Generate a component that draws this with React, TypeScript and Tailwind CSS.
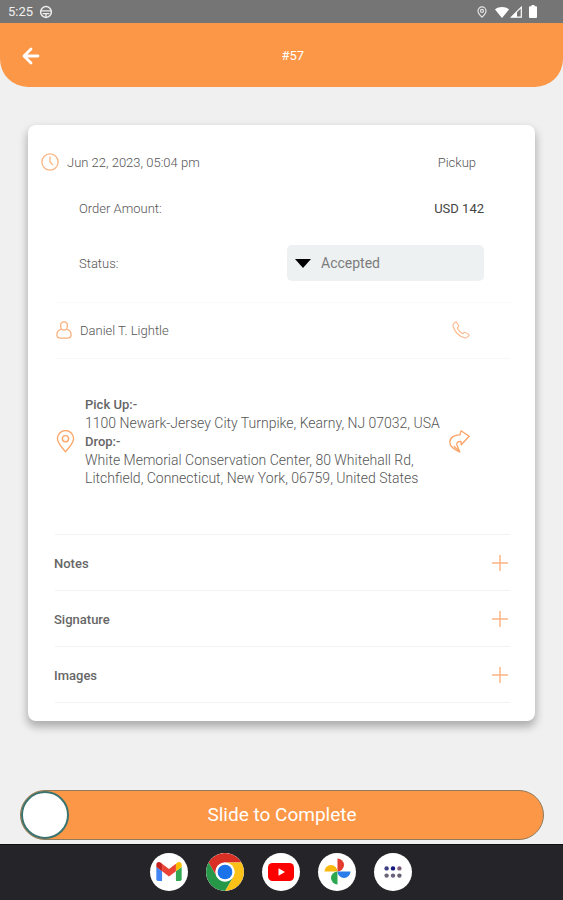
import { useState } from "react";

function StatusBar() {
  return (
    <div className="flex h-[23px] shrink-0 items-center justify-between bg-[#757575] pr-6 pl-2 text-white">
      <div className="flex items-center gap-1.5">
        <span className="text-[13px] leading-4 text-[#f0f0f0]">5:25</span>
        <svg className="size-3.5" viewBox="0 0 14 14" fill="none" stroke="#eee" strokeWidth="1.5" aria-hidden="true">
          <circle cx="7" cy="7" r="5.400" />
          <path d="M2 5.800h10M3.600 8.600h6.800M7 8.600v3.600" strokeWidth="1.300" />
        </svg>
      </div>
      <div className="flex items-center">
        <svg className="mr-[7px] h-3 w-3" viewBox="0 0 12 12" fill="none" stroke="#e4e4e4" aria-hidden="true">
          <path d="M6 11.200C3.400 8.600 2 6.700 2 4.900a4 4 0 0 1 8 0C10 6.700 8.600 8.600 6 11.200Z" strokeWidth="1.200" />
          <circle cx="6" cy="4.900" r="1.500" strokeWidth="1.200" />
        </svg>
        <svg className="h-3 w-3.5" viewBox="0 0 14 12" fill="#fff" aria-hidden="true">
          <path d="M7 12 0 3.400C4 .2 10 .2 14 3.400Z" />
        </svg>
        <svg className="ml-px h-3 w-3" viewBox="0 0 12 12" fill="none" aria-hidden="true">
          <path d="M11.300 1.200v10H1.300Z" stroke="#fff" strokeWidth="1.200" />
          <path d="M7 5.400v5.800H1.300Z" fill="#fff" />
        </svg>
        <svg className="mr-0.5 ml-[7px] h-[13px] w-2" viewBox="0 0 8 13" fill="#fff" aria-hidden="true">
          <path d="M2.500 0h3v1.300H7a1 1 0 0 1 1 1V12a1 1 0 0 1-1 1H1a1 1 0 0 1-1-1V2.300a1 1 0 0 1 1-1h1.500Z" />
        </svg>
      </div>
    </div>
  );
}

function Header() {
  return (
    <header className="grid h-16 shrink-0 grid-cols-2 items-center rounded-b-[28px] bg-[#fb9746] px-5 pt-0.5 text-white">
      <button type="button" aria-label="Back" className="flex size-[22px] items-center justify-center">
        <svg className="size-[18px]" viewBox="0 0 18 18" fill="none" stroke="currentColor" strokeWidth="2.800" strokeLinecap="round" strokeLinejoin="round" aria-hidden="true">
          <path d="M9 2 2 9l7 7M2.500 9H16" />
        </svg>
      </button>
      <h1 className="text-[13px] leading-5">#57</h1>
    </header>
  );
}

function ExpandRow({ title }: { title: string }) {
  const [open, setOpen] = useState(false);
  return (
    <div className="border-b border-[#f3f3f3]">
      <button
        type="button"
        aria-expanded={open}
        onClick={() => setOpen(!open)}
        className="-ml-px flex h-[55px] w-full items-center justify-between pt-0.5 text-left text-[13px] font-medium text-[#666]"
      >
        {title}
        <svg className="mb-0.5 size-[18px]" viewBox="0 0 18 18" stroke="#fbb583" strokeWidth="1.500" aria-hidden="true">
          <path d={open ? "M1 9h16" : "M1 9h16M9 1v16"} />
        </svg>
      </button>
    </div>
  );
}

function OrderCard() {
  return (
    <section className="mx-7 mt-[38px] rounded-lg bg-white pt-3.5 pb-[18px] text-[13px] leading-[18px] font-light text-[#555] shadow-[0_5px_8px_1px_rgba(0,0,0,0.28)]">
      <div className="flex h-[46px] items-center pr-[59px] pl-[13px]">
        <svg className="mr-2 size-[18px]" viewBox="0 0 18 18" fill="none" stroke="#fbb583" strokeWidth="1.300" strokeLinecap="round" aria-hidden="true">
          <circle cx="9" cy="9" r="8.100" />
          <path d="M9 4v5l2.500 2.500" />
        </svg>
        <time dateTime="2023-06-22T17:04" className="flex-1 pt-0.5">Jun 22, 2023, 05:04 pm</time>
        <span className="pt-0.5">Pickup</span>
      </div>
      <div className="flex h-[46px] items-center justify-between pt-0.5 pr-[51px] pl-[51px]">
        <span>Order Amount:</span>
        <span className="font-normal text-[#444]">USD 142</span>
      </div>
      <div className="flex h-16 items-center justify-between pr-[51px] pl-[51px]">
        <label htmlFor="status" className="pt-0.5">Status:</label>
        <div className="relative w-[197px]">
          <select id="status" defaultValue="Accepted" className="h-9 w-full appearance-none rounded-[5px] bg-[#edf1f2] pl-[34px] text-[14px] font-normal text-[#7c7c7c]">
            <option>Accepted</option>
            <option>Picked Up</option>
            <option>Completed</option>
          </select>
          <svg className="pointer-events-none absolute top-3.5 left-2 h-[9px] w-4" viewBox="0 0 16 9" aria-hidden="true">
            <path d="M0 0h16L8 9Z" />
          </svg>
        </div>
      </div>

      <div className="mt-[7px] mr-[25px] ml-[27px] border-t border-[#fafafa]">
        <div className="flex h-14 items-center border-b border-[#f8f8f8] pr-10 pb-0.5">
          <svg className="mr-2 ml-px h-[18px] w-4" viewBox="0 0 16 18" fill="none" stroke="#fbb07a" strokeWidth="1.300" strokeLinejoin="round" aria-hidden="true">
            <path d="M8 .8c2.200 0 3.400 1.700 3.400 3.900S10 9.200 8 9.200 4.600 6.900 4.600 4.700 5.800.8 8 .8Z" />
            <path d="M5.300 8.300C2.600 8.800.9 11 .9 13.700c0 2.200 1.700 3.400 3.600 3.400h7c1.900 0 3.600-1.200 3.600-3.400 0-2.700-1.700-4.900-4.400-5.400" />
          </svg>
          <span className="flex-1 pt-0.5">Daniel T. Lightle</span>
          <a href="tel:" aria-label="Call customer">
            <svg className="size-[18px]" viewBox="0 0 18 18" fill="none" stroke="#fcb98d" strokeWidth="1.100" strokeLinejoin="round" aria-hidden="true">
              <path d="M1.400 3.100 3.300 1.100c.5-.4 1-.3 1.300.2l2 3.200c.3.500.2 1-.2 1.400L5.300 7c.9 2.200 3 4.500 5.600 5.800l1.200-1.200c.4-.4.900-.5 1.400-.2l3.200 2c.5.300.6.800.2 1.300l-1.800 1.700c-.7.600-1.500.7-2.500.4C7.200 15.200 2.700 10.600 1.100 5.500c-.3-1-.3-1.700.3-2.400Z" />
            </svg>
          </a>
        </div>

        <div className="flex h-44 items-center border-b border-[#f3f3f3] pr-10 pb-2.5">
          <svg className="mr-2.5 h-[23px] w-5 shrink-0" viewBox="0 0 20 23" fill="none" stroke="#fba76a" strokeWidth="1.400" strokeLinejoin="round" aria-hidden="true">
            <path d="M10.500 21.800C5.500 16 2.400 12.500 2.400 8.700a8.100 8.100 0 0 1 16.200 0C18.600 12.500 15.500 16 10.500 21.800Z" />
            <circle cx="10.500" cy="8.700" r="3.100" />
          </svg>
          <dl className="flex min-w-0 flex-1 flex-col gap-px text-[14px] whitespace-nowrap">
            <div>
              <dt className="text-[13px] font-medium text-[#666]">Pick Up:-</dt>
              <dd>1100 Newark-Jersey City Turnpike, Kearny, NJ 07032, USA</dd>
            </div>
            <div>
              <dt className="text-[13px] font-medium text-[#666]">Drop:-</dt>
              <dd>
                White Memorial Conservation Center, 80 Whitehall Rd,
                <br />
                Litchfield, Connecticut, New York, 06759, United States
              </dd>
            </div>
          </dl>
          <button type="button" aria-label="Get directions">
            <svg className="h-[23px] w-[21px]" viewBox="0 0 21 23" fill="none" stroke="#fba367" strokeWidth="1.300" strokeLinejoin="round" strokeLinecap="round" aria-hidden="true">
              <path d="M12 .8 20.200 6.300 12.300 14.800 11.900 11.300C9 11.200 7.300 12.800 7.900 15L10.800 22C6 19.600 1 17.200.8 12.200.7 7.500 5.800 4.600 11 4.800Z" />
              <path d="m5.200 16.400 5 4.600" />
            </svg>
          </button>
        </div>

        <ExpandRow title="Notes" />
        <ExpandRow title="Signature" />
        <ExpandRow title="Images" />
      </div>
    </section>
  );
}

function SlideToComplete() {
  const [value, setValue] = useState(0);
  return (
    <div className="relative mt-auto mr-[19px] mb-1 ml-5 h-[50px] rounded-full border border-[#8f7c5c] bg-[#fb9746]">
      <label htmlFor="complete" className="absolute inset-0 flex items-center justify-center text-[19px] text-white">
        Slide to Complete
      </label>
      <input
        id="complete"
        type="range"
        min="0"
        max="100"
        value={value}
        onChange={(e) => setValue(Number(e.target.value))}
        className="relative block h-12 w-full cursor-pointer appearance-none rounded-full bg-transparent outline-none [&::-webkit-slider-thumb]:size-12 [&::-webkit-slider-thumb]:appearance-none [&::-webkit-slider-thumb]:rounded-full [&::-webkit-slider-thumb]:border-2 [&::-webkit-slider-thumb]:border-[#3a7470] [&::-webkit-slider-thumb]:bg-white"
      />
    </div>
  );
}

const dockButton = "flex size-[38px] items-center justify-center overflow-hidden rounded-full bg-white";

function Dock() {
  return (
    <nav aria-label="Apps" className="flex h-14 shrink-0 items-center justify-center gap-[18px] border-t border-[#101013] bg-[#242429] pr-px pb-0.5">
      <button type="button" aria-label="Gmail" className={dockButton}>
        <svg className="h-[19px] w-[26px]" viewBox="52 42 88 66" aria-hidden="true">
          <path fill="#4285f4" d="M58 108h14V74L52 59v43c0 3.320 2.690 6 6 6" />
          <path fill="#34a853" d="M120 108h14c3.320 0 6-2.690 6-6V59l-20 15" />
          <path fill="#fbbc04" d="M120 48v26l20-15v-8c0-7.420-8.470-11.650-14.400-7.200" />
          <path fill="#ea4335" d="M72 74V48l24 18 24-18v26L96 92" />
          <path fill="#c5221f" d="M52 51v8l20 15V48l-5.600-4.200c-5.940-4.450-14.400-.22-14.400 7.200" />
        </svg>
      </button>
      <button type="button" aria-label="Chrome" className={dockButton}>
        <svg className="size-[38px]" viewBox="0 0 48 48" aria-hidden="true">
          <path fill="#d93025" d="M24 12h20.780A24 24 0 0 0 3.220 12l10.390 18A12 12 0 0 1 24 12Z" />
          <path fill="#fbc116" d="M24 12h20.780A24 24 0 0 1 24 48l10.390-18A12 12 0 0 0 24 12Z" />
          <path fill="#279847" d="M13.610 30 3.220 12A24 24 0 0 0 24 48l10.390-18A12 12 0 0 1 13.610 30Z" />
          <circle cx="24" cy="24" r="12" fill="#fff" />
          <circle cx="24" cy="24" r="9.300" fill="#1a73e8" />
        </svg>
      </button>
      <button type="button" aria-label="YouTube" className={dockButton}>
        <svg className="h-[18px] w-[26px]" viewBox="0 0 26 18" aria-hidden="true">
          <rect width="26" height="18" rx="4.500" fill="#f00" />
          <path d="m10.500 5.200 6.500 3.800-6.500 3.800Z" fill="#fff" />
        </svg>
      </button>
      <button type="button" aria-label="Photos" className={dockButton}>
        <svg className="size-[27px]" viewBox="0 0 27 27" aria-hidden="true">
          <path fill="#e33b2e" d="M13.500.5a6.500 6.500 0 0 1 0 13Z" />
          <path fill="#f9b80e" d="M.5 13.500a6.500 6.500 0 0 1 13 0Z" />
          <path fill="#2b7de9" d="M26.500 13.500a6.500 6.500 0 0 1-13 0Z" />
          <path fill="#2fa650" d="M13.500 26.500a6.500 6.500 0 0 1 0-13Z" />
        </svg>
      </button>
      <button type="button" aria-label="All apps" className={dockButton}>
        <svg className="h-3 w-[18px]" viewBox="0 0 18 12" aria-hidden="true">
          <circle cx="2.600" cy="2.400" r="2.200" fill="#3d3f80" />
          <circle cx="9" cy="2.400" r="2.200" fill="#15157f" />
          <circle cx="15.400" cy="2.400" r="2.200" fill="#80607a" />
          <circle cx="2.600" cy="9.600" r="2.200" fill="#6a6675" />
          <circle cx="9" cy="9.600" r="2.200" fill="#6a6080" />
          <circle cx="15.400" cy="9.600" r="2.200" fill="#666072" />
        </svg>
      </button>
    </nav>
  );
}

export default function App() {
  return (
    <div className="flex min-h-screen flex-col bg-[#f0f0f0] font-[Roboto,sans-serif]">
      <StatusBar />
      <Header />
      <main className="flex flex-1 flex-col">
        <OrderCard />
        <SlideToComplete />
      </main>
      <Dock />
    </div>
  );
}
